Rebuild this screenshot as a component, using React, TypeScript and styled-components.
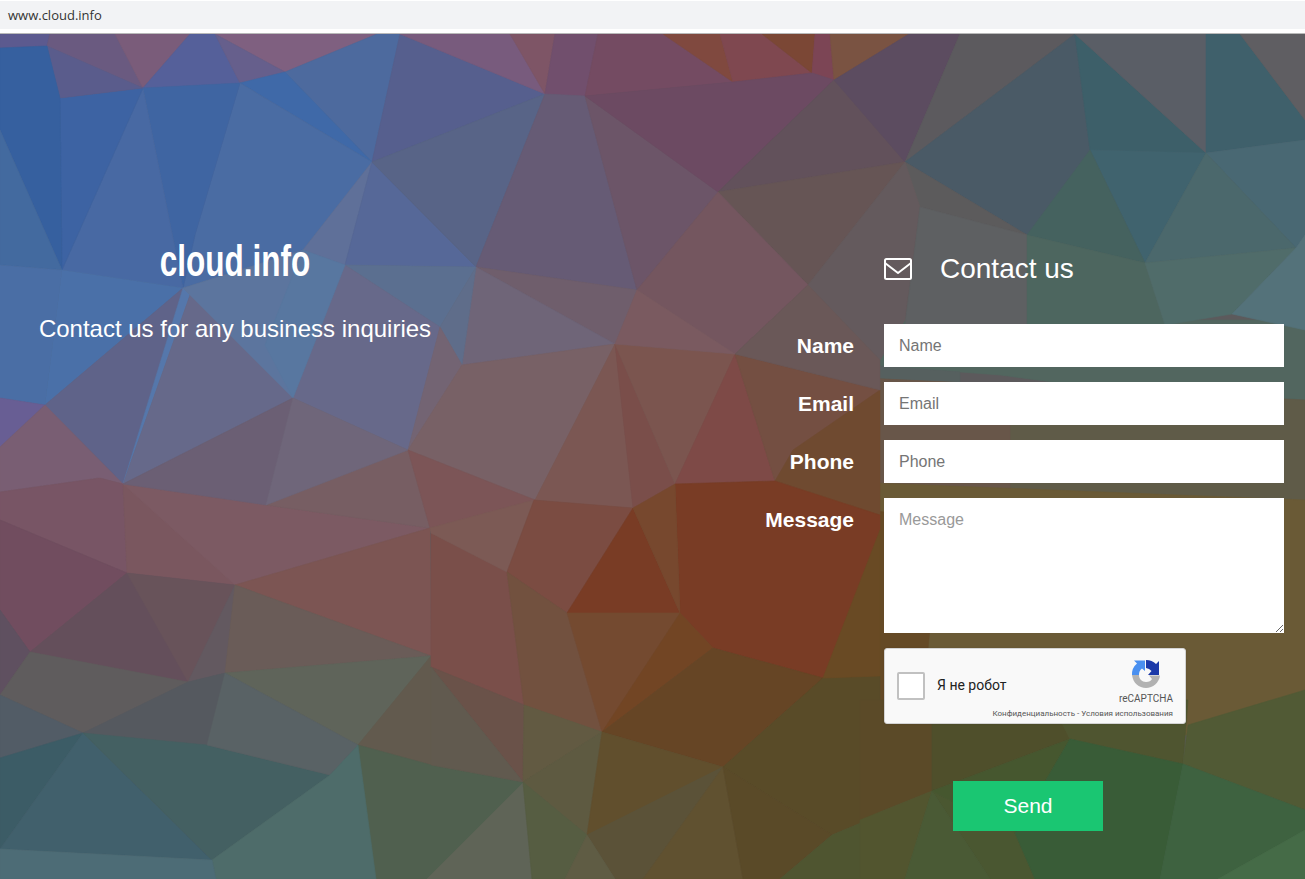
import React from 'react';
import styled, { createGlobalStyle } from 'styled-components';

const GlobalStyle = createGlobalStyle`
  html, body {
    margin: 0;
    padding: 0;
    background: #fff;
  }
  * {
    box-sizing: border-box;
  }
`;

// low-poly backdrop, listed back to front in page coordinates
const MESH: [string, string][] = [
  ['800,320 1305,320 1305,400 1075,385 1000,375 800,360', '#52665f'],
  ['800,360 960,372 960,390 800,390', '#56605f'],
  ['800,375 1305,400 1305,520 800,500', '#5f5b48'],
  ['800,375 1010,385 1010,500 800,500', '#685649'],
  ['800,480 1305,500 1305,735 800,735', '#6a5a36'],
  ['800,500 940,520 920,735 800,735', '#654a26'],
  ['0,34 50,34 47,46 0,48', '#5c5a8f'],
  ['50,34 115,34 143,88 47,46', '#6a5a80'],
  ['115,34 190,34 143,88', '#7a5c7a'],
  ['190,34 215,34 240,83 143,88', '#55609a'],
  ['215,34 377,34 285,72', '#7f6080'],
  ['215,34 285,72 240,83', '#665f8c'],
  ['377,34 400,34 372,162 285,72', '#4d6a9e'],
  ['240,83 285,72 372,162', '#3f69a8'],
  ['240,83 372,162 303,250 183,288 195,235', '#4a6ca3'],
  ['143,88 240,83 195,235 183,288', '#3f65a2'],
  ['143,88 183,288 62,270', '#4869a3'],
  ['60,98 143,88 62,270', '#3d63a3'],
  ['47,46 143,88 60,98', '#5a5c8c'],
  ['0,48 47,46 60,98 62,270 0,130', '#36609f'],
  ['0,130 62,270 0,265', '#436a9f'],
  ['0,265 62,270 45,405 0,398', '#4a6ea5'],
  ['62,270 183,288 45,405', '#4a70a8'],
  ['183,288 123,484 45,405', '#5f6389'],
  ['183,288 190,295 123,484', '#5577ab'],
  ['190,295 293,398 123,484', '#66698a'],
  ['183,288 303,250 345,265 293,398 190,295', '#5c759e'],
  ['303,250 372,162 345,265', '#5f7099'],
  ['372,162 476,267 345,265', '#566898'],
  ['400,34 545,94 372,162', '#565f8e'],
  ['400,34 510,34 545,94', '#785b7d'],
  ['510,34 555,34 545,94', '#7e5566'],
  ['555,34 598,34 585,96 545,94', '#714f6d'],
  ['372,162 545,94 476,267', '#586487'],
  ['545,94 585,96 637,290 476,267', '#665b75'],
  ['585,96 718,192 637,290', '#6c5568'],
  ['598,34 663,34 733,82 585,96', '#744b62'],
  ['663,34 720,34 733,82', '#80493f'],
  ['720,34 762,34 812,73 733,82', '#7f4850'],
  ['762,34 815,34 812,73', '#7b4735'],
  ['815,34 830,34 834,80 812,73', '#7c4555'],
  ['830,34 909,34 834,80', '#7a5342'],
  ['585,96 733,82 812,73 834,80 718,192', '#6c4a62'],
  ['834,80 905,162 718,192', '#62515b'],
  ['834,80 909,34 960,34 905,162', '#5c4c60'],
  ['960,34 1075,34 905,162', '#5c5a5e'],
  ['1075,34 1090,150 1027,235 905,162', '#4a5a66'],
  ['1075,34 1206,153 1090,150', '#3d5f69'],
  ['1075,34 1206,34 1206,153', '#5a5e66'],
  ['1206,34 1240,34 1305,120 1305,140 1206,153', '#3f606b'],
  ['1240,34 1305,34 1305,120', '#5f5e62'],
  ['1090,150 1206,153 1145,263', '#40636e'],
  ['1090,150 1145,263 1027,235', '#45625f'],
  ['1206,153 1305,140 1305,235 1296,248', '#496873'],
  ['1206,153 1296,248 1145,263', '#4b686c'],
  ['905,162 1027,235 920,207', '#5c5b5c'],
  ['718,192 905,162 808,285', '#665555'],
  ['808,285 905,162 920,207 905,320 880,360', '#645a5d'],
  ['920,207 1027,235 1027,335 905,325', '#5e6062'],
  ['1027,235 1145,263 1165,325 1027,325', '#4d665f'],
  ['1145,263 1296,248 1232,314 1165,325', '#506c6a'],
  ['1296,248 1305,235 1305,330 1232,314', '#54727a'],
  ['476,267 637,290 615,344', '#6f5e6c'],
  ['476,267 615,344 462,365', '#6f6578'],
  ['345,265 476,267 440,327', '#5b6f90'],
  ['440,327 476,267 462,365', '#5f6d8a'],
  ['345,265 440,327 408,450 293,398', '#67698a'],
  ['265,345 303,250 345,265 293,398', '#5877a0'],
  ['440,327 462,365 408,450', '#736473'],
  ['462,365 615,344 535,500 408,450', '#786166'],
  ['615,344 633,508 535,500', '#7b5753'],
  ['615,344 675,484 633,508', '#7a4e4a'],
  ['615,344 735,354 675,484', '#7b554f'],
  ['735,354 775,481 675,484', '#7e4a47'],
  ['735,354 880,390 860,420 775,481', '#744f42'],
  ['793,450 880,390 880,515 775,481', '#6f4a30'],
  ['637,290 718,192 808,285 735,354', '#74565f'],
  ['637,290 735,354 615,344', '#7a5a60'],
  ['735,354 808,285 880,360 880,390', '#6a5858'],
  ['0,398 45,405 0,447', '#685e94'],
  ['0,447 45,405 123,484 100,478 0,492', '#795e73'],
  ['0,492 100,478 123,484 127,573 0,520', '#785565'],
  ['123,484 266,505 235,585 127,573', '#7a575f'],
  ['123,484 266,505 430,528 235,585', '#7c5a63'],
  ['266,505 408,450 430,528', '#775e63'],
  ['123,484 293,398 266,505', '#6b5f74'],
  ['293,398 408,450 266,505', '#6f667a'],
  ['408,450 535,500 430,528', '#7c5557'],
  ['235,585 430,528 431,656', '#7c5553'],
  ['0,520 127,573 30,652 0,610', '#714d5f'],
  ['0,610 30,652 0,695', '#5f5060'],
  ['30,652 127,573 188,682', '#644f5b'],
  ['127,573 235,585 188,682', '#68535a'],
  ['235,585 225,673 188,682', '#635960'],
  ['235,585 431,656 225,673', '#6a5c58'],
  ['30,652 188,682 83,733 0,695', '#5f5c5d'],
  ['83,733 188,682 225,673 207,745', '#55595f'],
  ['0,695 83,733 0,758', '#525c66'],
  ['0,758 83,733 0,849', '#3c5c66'],
  ['0,849 83,733 212,860', '#41606c'],
  ['83,733 207,745 330,775 212,860', '#446062'],
  ['225,673 431,656 358,745', '#5f645a'],
  ['225,673 358,745 330,775 207,745', '#596265'],
  ['431,656 431,765 358,745', '#625a4e'],
  ['358,745 431,765 523,782 532,879 362,879', '#50604f'],
  ['523,783 532,879 427,879', '#5f6457'],
  ['330,775 358,745 376,879 216,879 212,860', '#4e6c6a'],
  ['0,849 212,860 216,879 0,879', '#4d6c76'],
  ['431,533 507,572 524,705 431,667', '#7a4f4a'],
  ['430,528 534,500 507,572 431,533', '#7c5a55'],
  ['534,500 633,508 567,613 507,572', '#7b4c42'],
  ['675,484 775,481 880,515 880,530 823,678 713,648 680,613', '#793c25'],
  ['633,508 680,613 567,613', '#793c25'],
  ['633,508 675,484 680,613', '#77482e'],
  ['507,572 567,613 602,732 524,705', '#72513f'],
  ['567,613 680,613 602,732', '#744a30'],
  ['680,613 713,648 602,732', '#724524'],
  ['713,648 823,678 723,767 602,732', '#664525'],
  ['823,678 880,676 880,815 832,835 723,767', '#594b28'],
  ['880,530 880,676 823,678', '#694a24'],
  ['431,667 524,705 523,782', '#6a5249'],
  ['524,705 602,732 523,782', '#625a42'],
  ['431,667 523,782 431,765', '#615a4f'],
  ['523,782 602,732 587,835', '#5e5a41'],
  ['602,732 723,767 587,835', '#614f2d'],
  ['587,835 723,767 643,879 615,879', '#5b5238'],
  ['723,767 743,879 643,879', '#605130'],
  ['723,767 832,835 780,879 743,879', '#5a4a28'],
  ['523,782 587,835 565,879 532,879', '#565d42'],
  ['587,835 615,879 565,879', '#5f5c44'],
  ['832,835 880,815 880,879 780,879', '#4f5530'],
  ['860,700 932,700 932,791 860,820', '#5b4a28'],
  ['932,700 1050,700 1070,739 932,791', '#4f4f2b'],
  ['1050,700 1188,700 1183,764 1070,739', '#4f5530'],
  ['1183,764 1188,725 1305,690 1305,810', '#515a35'],
  ['932,791 1015,833 1035,879 990,879', '#4a5731'],
  ['932,791 1070,739 1015,833', '#46572f'],
  ['1015,833 1070,739 1183,764 1160,879 1035,879', '#395c37'],
  ['860,820 932,791 905,879 860,879', '#52552f'],
  ['932,791 990,879 905,879', '#4a5a35'],
  ['1183,764 1305,810 1305,830 1218,879 1160,879', '#3e6240'],
  ['1305,830 1305,879 1218,879', '#456b47'],
];

const Page = styled.div`
  display: flex;
  flex-direction: column;
  height: 879px;
  overflow: hidden;
`;

const UrlBar = styled.div`
  height: 34px;
  flex: none;
  background: #fff;
  border-bottom: 1px solid #b9b9b9;
  padding-top: 1px;
`;

const UrlText = styled.div`
  height: 28px;
  padding-left: 8px;
  background: #f2f3f5;
  color: #333;
  font: 13px/28px "Open Sans", sans-serif;
`;

const Main = styled.main`
  position: relative;
  flex: 1;
  display: flex;
  background: #5c5a5c;
  overflow: hidden;
`;

const Mesh = styled.svg`
  position: absolute;
  inset: 0;
  width: 100%;
  height: 100%;
`;

const Intro = styled.section`
  position: relative;
  width: 470px;
  flex: none;
  padding-top: 200px;
  text-align: center;
  color: #fff;
  font-family: "Liberation Sans", Arial, sans-serif;
`;

const Brand = styled.h1`
  margin: 0;
  font: 700 45px/54px "Liberation Sans", sans-serif;
  transform: scaleX(0.7);
`;

const Tagline = styled.p`
  margin: 25px 0 0;
  font-size: 24px;
  line-height: 32px;
`;

const FormSide = styled.section`
  position: relative;
  flex: 1;
  padding-top: 212px;
  display: grid;
  grid-template-columns: 384px 400px;
  column-gap: 30px;
  grid-auto-rows: min-content;
  font-family: "Liberation Sans", Arial, sans-serif;
  color: #fff;
`;

const FormHead = styled.div`
  grid-column: 2;
  display: flex;
  align-items: center;
  gap: 28px;
  height: 46px;
  margin-bottom: 32px;
`;

const HeadTitle = styled.h2`
  margin: 0;
  font-size: 28px;
  font-weight: 400;
  line-height: 46px;
`;

const Label = styled.label`
  grid-column: 1;
  text-align: right;
  font-size: 21px;
  font-weight: 700;
  line-height: 43px;
`;

const Field = styled.input`
  grid-column: 2;
  display: block;
  width: 400px;
  height: 43px;
  margin-bottom: 15px;
  padding: 0 15px;
  border: none;
  border-radius: 0;
  outline: none;
  background: #fff;
  font: 16px "Liberation Sans", Arial, sans-serif;
  &::placeholder {
    color: #757575;
    opacity: 1;
  }
`;

const MessageField = styled.textarea`
  grid-column: 2;
  display: block;
  width: 400px;
  height: 135px;
  margin-bottom: 15px;
  padding: 13px 15px;
  border: none;
  border-radius: 0;
  outline: none;
  background: #fff;
  font: 16px/18px "Liberation Sans", Arial, sans-serif;
  &::placeholder {
    color: #999;
    opacity: 1;
  }
`;

const Captcha = styled.div`
  grid-column: 2;
  width: 302px;
  height: 76px;
  padding: 0 12px;
  display: flex;
  align-items: center;
  position: relative;
  background: #f9f9f9;
  border: 1px solid #d3d3d3;
  border-radius: 3px;
  box-shadow: 0 0 3px rgba(0, 0, 0, 0.08);
  color: #000;
  font-family: Roboto, sans-serif;
`;

const CaptchaBox = styled.span`
  width: 28px;
  height: 28px;
  flex: none;
  background: #fff;
  border: 2px solid #c1c1c1;
  border-radius: 2px;
`;

const CaptchaLabel = styled.span`
  margin: 0 0 2px 12px;
  font-size: 14px;
  color: #222;
`;

const CaptchaBrand = styled.div`
  margin-left: auto;
  display: flex;
  flex-direction: column;
  align-items: center;
  align-self: flex-start;
  padding-top: 10px;
`;

const CaptchaName = styled.span`
  margin-top: 4px;
  font-size: 10px;
  line-height: 12px;
  color: #555;
`;

const CaptchaTerms = styled.span`
  position: absolute;
  right: 12px;
  bottom: 4px;
  font-size: 8px;
  line-height: 10px;
  color: #555;
  white-space: nowrap;
`;

const SendButton = styled.button`
  grid-column: 2;
  width: 150px;
  height: 50px;
  margin: 57px 0 0 69px;
  border: none;
  background: #1ac672;
  color: #fff;
  font: 21px "Liberation Sans", Arial, sans-serif;
`;

const EnvelopeIcon = () => (
  <svg width="28" height="22" viewBox="0 0 28 22" fill="none" stroke="#fff" strokeWidth="2" strokeLinejoin="round">
    <rect x="1" y="1" width="26" height="20" rx="1.5" />
    <path d="M1 5 L14 15 L27 5" />
  </svg>
);

const RecaptchaLogo = () => (
  <svg width="30" height="30" viewBox="0 0 30 30">
    <path d="M1 16 H8 C8 20 11 23 15 23 C18 23 20 22 21 20 L18 16.5 H29 C28 24 22 29 15 29 C8 29 2 24 1 16Z" fill="#b2b2b2" />
    <path d="M15 1 A14 14 0 0 1 25 5 L28 2 V16 H17 L20.5 12 A8 8 0 0 0 15 9 Z" fill="#1c3aa9" />
    <path d="M1 16 A14 14 0 0 1 6 4.5 L3 1.5 H14 V12 L11 9.5 A8 8 0 0 0 8 16 Z" fill="#4a90f0" />
  </svg>
);

export default function App() {
  return (
    <>
      <GlobalStyle />
      <Page>
        <UrlBar>
          <UrlText>www.cloud.info</UrlText>
        </UrlBar>
        <Main>
          <Mesh viewBox="0 34 1305 845" preserveAspectRatio="none">
            {MESH.map(([points, fill]) => (
              <polygon key={points} points={points} fill={fill} stroke={fill} strokeWidth="0.6" />
            ))}
          </Mesh>
          <Intro>
            <Brand>cloud.info</Brand>
            <Tagline>Contact us for any business inquiries</Tagline>
          </Intro>
          <FormSide>
            <FormHead>
              <EnvelopeIcon />
              <HeadTitle>Contact us</HeadTitle>
            </FormHead>
            <Label htmlFor="name">Name</Label>
            <Field id="name" placeholder="Name" />
            <Label htmlFor="email">Email</Label>
            <Field id="email" placeholder="Email" />
            <Label htmlFor="phone">Phone</Label>
            <Field id="phone" placeholder="Phone" />
            <Label htmlFor="message">Message</Label>
            <MessageField id="message" placeholder="Message" />
            <Captcha>
              <CaptchaBox />
              <CaptchaLabel>Я не робот</CaptchaLabel>
              <CaptchaBrand>
                <RecaptchaLogo />
                <CaptchaName>reCAPTCHA</CaptchaName>
              </CaptchaBrand>
              <CaptchaTerms>Конфиденциальность - Условия использования</CaptchaTerms>
            </Captcha>
            <SendButton type="button">Send</SendButton>
          </FormSide>
        </Main>
      </Page>
    </>
  );
}
